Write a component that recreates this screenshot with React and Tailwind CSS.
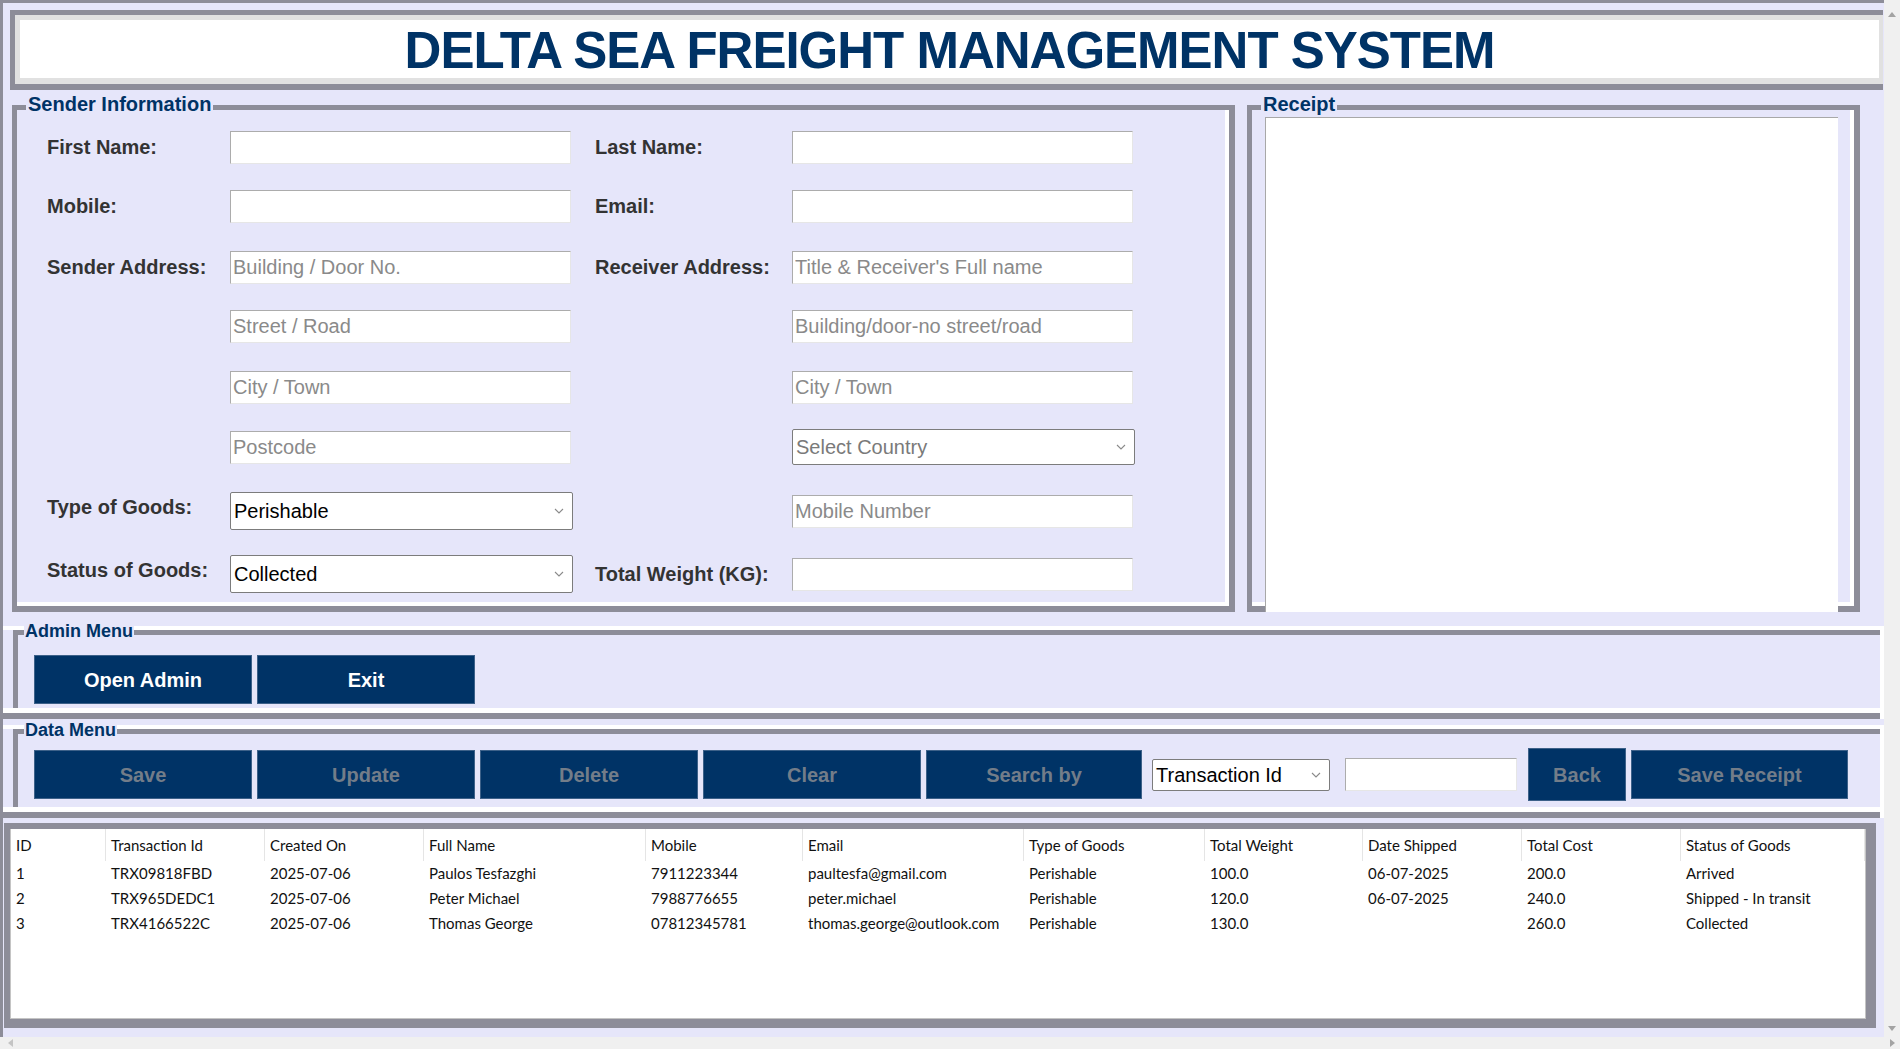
import React from 'react';

// Swing-style freight form, rebuilt with flex + tailwind
const Chevron = () => (
  <svg width="10" height="6" viewBox="0 0 10 6" className="shrink-0">
    <path d="M1 1l4 4 4-4" fill="none" stroke="#8a8a8a" strokeWidth="1.1" />
  </svg>
);

function TextBox({ placeholder, w = 'w-[341px]' }) {
  return (
    <input
      readOnly
      placeholder={placeholder}
      className={`${w} h-[33px] bg-white border border-[#acacac] border-r-[#e6e6e6] border-b-[#e6e6e6] px-[2px] text-[20px] text-black outline-none placeholder:text-[#8a8a8a]`}
    />
  );
}

function SelectBox({ value, muted, w = 'w-[343px]', h = 'h-[38px]' }) {
  return (
    <div
      className={`${w} ${h} bg-white border border-[#7c7c7c] rounded-[2px] flex items-center justify-between pl-[3px] pr-[8px] text-[20px] ${muted ? 'text-[#7a7a7a]' : 'text-black'}`}
    >
      <span>{value}</span>
      <Chevron />
    </div>
  );
}

function FieldLabel({ children, className = '' }) {
  return (
    <div className={`text-[20px] font-bold text-[#333333] whitespace-nowrap ${className}`}>{children}</div>
  );
}

function Row({ className = '', leftLabel, left, rightLabel, right, shift = '' }) {
  return (
    <div className={`flex h-[38px] items-center ${className}`}>
      <FieldLabel className={`w-[183px] ${shift}`}>{leftLabel}</FieldLabel>
      <div className="w-[343px] flex items-center">{left}</div>
      <FieldLabel className="w-[197px] ml-[22px]">{rightLabel}</FieldLabel>
      <div className="flex items-center">{right}</div>
    </div>
  );
}

function NavyButton({ children, disabled, className = 'w-[218px] h-[49px]' }) {
  return (
    <button
      className={`${className} shrink-0 bg-[#003366] border border-[#3d6189] text-[20px] font-bold ${disabled ? 'text-[#737d89]' : 'text-white'}`}
    >
      {children}
    </button>
  );
}

function MenuSection({ title, pad, children }) {
  return (
    <div className="border-t-[4px] border-white border-r-[4px]">
      <div className={`relative ml-[10px] h-[78px] border-t-[5px] border-l-[5px] border-[#8d8d99] ${pad} pl-[16px]`}>
        <span className="absolute -top-[14px] left-[6px] bg-[#e6e6fa] px-[1px] text-[18px] leading-[20px] font-bold text-[#003366]">
          {title}
        </span>
        {children}
      </div>
      <div className="h-[5px] bg-white" />
      <div className="h-[6px] bg-[#8d8d99]" />
    </div>
  );
}

const cols = ['ID', 'Transaction Id', 'Created On', 'Full Name', 'Mobile', 'Email', 'Type of Goods', 'Total Weight', 'Date Shipped', 'Total Cost', 'Status of Goods'];

const rows = [
  ['1', 'TRX09818FBD', '2025-07-06', 'Paulos Tesfazghi', '7911223344', 'paultesfa@gmail.com', 'Perishable', '100.0', '06-07-2025', '200.0', 'Arrived'],
  ['2', 'TRX965DEDC1', '2025-07-06', 'Peter Michael', '7988776655', 'peter.michael', 'Perishable', '120.0', '06-07-2025', '240.0', 'Shipped - In transit'],
  ['3', 'TRX4166522C', '2025-07-06', 'Thomas George', '07812345781', 'thomas.george@outlook.com', 'Perishable', '130.0', '', '260.0', 'Collected'],
];

const gridCols = 'grid grid-cols-[95px_159px_159px_222px_157px_221px_181px_158px_159px_159px_1fr]';

export default function App() {
  return (
    <div className="w-[1900px] h-[1049px] bg-[#f0f0f0] flex flex-col overflow-hidden font-['Liberation_Sans',Arial,sans-serif]">
      <div className="flex h-[1037px]">
        {/* main frame */}
        <div className="w-[1884px] h-[1037px] border-t-[3px] border-l-[3px] border-[#8d8d99] bg-[#e6e6fa] overflow-hidden">
          {/* title */}
          <div className="ml-[7px] mt-[7px] w-[1873px] h-[80px] border-t-[5px] border-l-[5px] border-b-[6px] border-[#8d8d99]">
            <div className="h-full border-t-[5px] border-l-[5px] border-b-[6px] border-r-[4px] border-[#e1e1e1] bg-white flex items-center justify-center">
              <h1 className="text-[51px] leading-none font-bold tracking-[-1px] text-[#003366] pt-[3px]">
                DELTA SEA FREIGHT MANAGEMENT SYSTEM
              </h1>
            </div>
          </div>

          {/* sender + receipt */}
          <div className="flex ml-[9px] mt-[15px] gap-[12px] h-[507px]">
            <div className="relative w-[1223px] h-full border-t-[5px] border-l-[5px] border-r-[6px] border-b-[6px] border-[#8d8d99] shadow-[inset_-4px_-4px_0_#ffffff] pt-[18px] pl-[30px]">
              <span className="absolute -top-[17px] left-[9px] bg-[#e6e6fa] px-[2px] text-[20px] leading-[22px] font-bold text-[#003366]">
                Sender Information
              </span>
              <Row leftLabel="First Name:" left={<TextBox />} rightLabel="Last Name:" right={<TextBox />} />
              <Row className="mt-[21px]" leftLabel="Mobile:" left={<TextBox />} rightLabel="Email:" right={<TextBox />} />
              <Row
                className="mt-[23px]"
                leftLabel="Sender Address:"
                left={<TextBox placeholder="Building / Door No." />}
                rightLabel="Receiver Address:"
                right={<TextBox placeholder="Title & Receiver's Full name" />}
              />
              <Row className="mt-[21px]" left={<TextBox placeholder="Street / Road" />} right={<TextBox placeholder="Building/door-no street/road" />} />
              <Row className="mt-[23px]" left={<TextBox placeholder="City / Town" />} right={<TextBox placeholder="City / Town" />} />
              <Row className="mt-[22px]" left={<TextBox placeholder="Postcode" />} right={<SelectBox value="Select Country" muted h="h-[36px]" />} />
              <Row
                className="mt-[26px]"
                shift="pb-[9px]"
                leftLabel="Type of Goods:"
                left={<SelectBox value="Perishable" />}
                right={<TextBox placeholder="Mobile Number" />}
              />
              <Row
                className="mt-[25px]"
                shift="pb-[9px]"
                leftLabel="Status of Goods:"
                left={<SelectBox value="Collected" />}
                rightLabel="Total Weight (KG):"
                right={<TextBox />}
              />
            </div>

            <div className="relative w-[613px] h-full border-t-[5px] border-l-[5px] border-r-[6px] border-b-[6px] border-[#8d8d99] shadow-[inset_-4px_-4px_0_#ffffff] pt-[7px] pl-[13px] pr-[16px] flex flex-col">
              <span className="absolute -top-[17px] left-[9px] bg-[#e6e6fa] px-[2px] text-[20px] leading-[22px] font-bold text-[#003366]">
                Receipt
              </span>
              <div className="relative z-10 flex-1 -mb-[6px] bg-white border-l border-t border-[#a8a8a8]" />
            </div>
          </div>

          {/* admin menu */}
          <div className="mt-[14px]">
            <MenuSection title="Admin Menu" pad="pt-[20px]">
              <div className="flex gap-[5px]">
                <NavyButton>Open Admin</NavyButton>
                <NavyButton>Exit</NavyButton>
              </div>
            </MenuSection>
          </div>

          {/* data menu */}
          <div className="mt-[6px]">
            <MenuSection title="Data Menu" pad="pt-[16px]">
              <div className="flex items-center h-[49px]">
                <div className="flex gap-[5px]">
                  <NavyButton disabled>Save</NavyButton>
                  <NavyButton disabled>Update</NavyButton>
                  <NavyButton disabled>Delete</NavyButton>
                  <NavyButton disabled>Clear</NavyButton>
                  <NavyButton disabled className="w-[216px] h-[49px]">Search by</NavyButton>
                </div>
                <div className="ml-[10px]">
                  <SelectBox value="Transaction Id" w="w-[178px]" h="h-[32px]" />
                </div>
                <div className="ml-[15px]">
                  <TextBox w="w-[172px]" />
                </div>
                <NavyButton disabled className="ml-[11px] w-[98px] h-[53px]">Back</NavyButton>
                <NavyButton disabled className="ml-[5px] w-[217px] h-[49px]">Save Receipt</NavyButton>
              </div>
            </MenuSection>
          </div>

          {/* table */}
          <div className="ml-[1px] mt-[5px] w-[1872px] h-[205px] border-t-[6px] border-l-[6px] border-r-[10px] border-b-[9px] border-[#8d8d99]">
            <div className="h-full bg-white border-l border-b border-r border-[#c4c4c4] font-['Lato',sans-serif] text-[15px] text-[#111111]">
              <div className={`${gridCols} h-[32px]`}>
                {cols.map((c) => (
                  <div key={c} className="flex items-center pl-[5px] border-r border-[#e5e5e5] whitespace-nowrap">
                    {c}
                  </div>
                ))}
              </div>
              {rows.map((r) => (
                <div key={r[0]} className={`${gridCols} h-[25px]`}>
                  {r.map((v, i) => (
                    <div key={i} className="flex items-center pl-[5px] whitespace-nowrap overflow-hidden">
                      {v}
                    </div>
                  ))}
                </div>
              ))}
            </div>
          </div>
        </div>

        {/* vertical scrollbar */}
        <div className="w-[16px] h-full flex flex-col items-center justify-between pt-[12px] pb-[6px]">
          <svg width="8" height="5" viewBox="0 0 8 5"><path d="M0 5L4 0l4 5z" fill="#a3a3a3" /></svg>
          <svg width="8" height="5" viewBox="0 0 8 5"><path d="M0 0l4 5 4-5z" fill="#a3a3a3" /></svg>
        </div>
      </div>

      {/* horizontal scrollbar */}
      <div className="h-[12px] flex items-center justify-between pl-[8px] pr-[5px]">
        <svg width="5" height="8" viewBox="0 0 5 8"><path d="M5 0L0 4l5 4z" fill="#c4c4c4" /></svg>
        <svg width="5" height="8" viewBox="0 0 5 8"><path d="M0 0l5 4-5 4z" fill="#a3a3a3" /></svg>
      </div>
    </div>
  );
}
